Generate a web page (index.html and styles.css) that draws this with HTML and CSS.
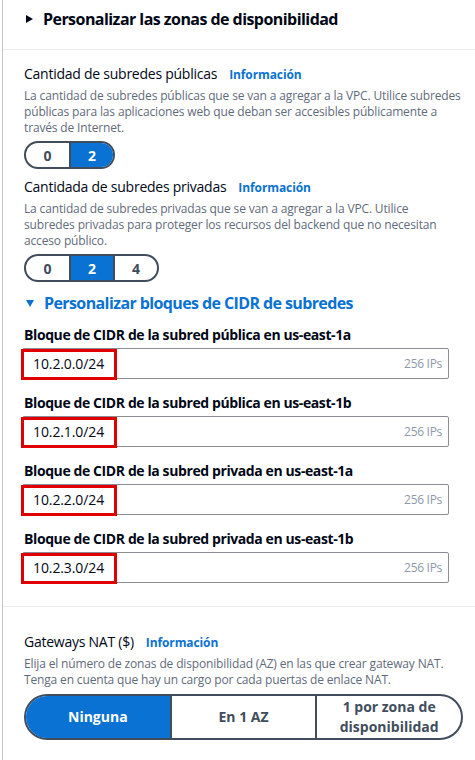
FILE: index.html
```html
<!DOCTYPE html>
<html lang="es">
<head>
<meta charset="utf-8">
<link rel="stylesheet" href="styles.css">
</head>
<body>
<div class="panel">
  <div class="section-head">
    <span class="caret caret-right"></span>
    <span class="head-title">Personalizar las zonas de disponibilidad</span>
  </div>
  <div class="section">
    <div class="field">
      <div class="label-row"><span class="label">Cantidad de subredes públicas</span><a class="info">Información</a></div>
      <div class="desc">La cantidad de subredes públicas que se van a agregar a la VPC. Utilice subredes públicas para las aplicaciones web que deban ser accesibles públicamente a través de Internet.</div>
      <div class="seg seg-small">
        <span class="opt">0</span><span class="opt on">2</span>
      </div>
    </div>
    <div class="field field-2">
      <div class="label-row"><span class="label">Cantidada de subredes privadas</span><a class="info">Información</a></div>
      <div class="desc">La cantidad de subredes privadas que se van a agregar a la VPC. Utilice<br>subredes privadas para proteger los recursos del backend que no necesitan acceso público.</div>
      <div class="seg seg-small">
        <span class="opt">0</span><span class="opt on">2</span><span class="opt">4</span>
      </div>
    </div>
    <div class="sub-head">
      <span class="caret caret-down"></span>
      <span class="sub-title">Personalizar bloques de CIDR de subredes</span>
    </div>
    <div class="cidr">
      <div class="cidr-label">Bloque de CIDR de la subred pública en us-east-1a</div>
      <div class="input"><span class="val">10.2.0.0/24</span><span class="ips">256 IPs</span><span class="mark"></span></div>
    </div>
    <div class="cidr">
      <div class="cidr-label">Bloque de CIDR de la subred pública en us-east-1b</div>
      <div class="input"><span class="val">10.2.1.0/24</span><span class="ips">256 IPs</span><span class="mark"></span></div>
    </div>
    <div class="cidr">
      <div class="cidr-label">Bloque de CIDR de la subred privada en us-east-1a</div>
      <div class="input"><span class="val">10.2.2.0/24</span><span class="ips">256 IPs</span><span class="mark"></span></div>
    </div>
    <div class="cidr">
      <div class="cidr-label">Bloque de CIDR de la subred privada en us-east-1b</div>
      <div class="input"><span class="val">10.2.3.0/24</span><span class="ips">256 IPs</span><span class="mark"></span></div>
    </div>
  </div>
  <div class="section section-nat">
    <div class="label-row"><span class="label">Gateways NAT ($)</span><a class="info">Información</a></div>
    <div class="desc">Elija el número de zonas de disponibilidad (AZ) en las que crear gateway NAT. Tenga en cuenta que hay un cargo por cada puertas de enlace NAT.</div>
    <div class="seg seg-big">
      <span class="opt on">Ninguna</span><span class="opt">En 1 AZ</span><span class="opt">1 por zona de disponibilidad</span>
    </div>
  </div>
</div>
</body>
</html>
```

FILE: styles.css
```css
* { box-sizing: border-box; }
html, body { margin: 0; padding: 0; background: #fff; }
body {
  font-family: "Open Sans", "Noto Sans", sans-serif;
  color: #000716;
  padding-left: 2px;
}
.panel {
  border-left: 1px solid #c6c6cd;
  min-height: 760px;
}
.section-head {
  height: 50px;
  border-bottom: 1px solid #e9ebed;
  display: flex;
  align-items: center;
  padding: 0 0 12px 23px;
  gap: 10px;
}
.caret { display: inline-block; width: 0; height: 0; }
.caret-right {
  border-top: 4px solid transparent;
  border-bottom: 4px solid transparent;
  border-left: 7px solid #000716;
}
.caret-down {
  border-left: 4px solid transparent;
  border-right: 4px solid transparent;
  border-top: 7px solid #0972d3;
}
.head-title {
  font-size: 16px;
  font-weight: 700;
  line-height: 22px;
  letter-spacing: -0.55px;
}
.section { padding: 14px 12px 23px 21px; border-bottom: 1px solid #e9ebed; }
.label-row { display: flex; align-items: center; gap: 12px; height: 20px; }
.label { font-size: 14px; line-height: 20px; letter-spacing: -0.25px; }
.info { font-size: 12px; font-weight: 700; color: #0972d3; letter-spacing: -0.1px; }
.desc {
  margin-top: 4px;
  font-size: 12px;
  line-height: 16px;
  color: #5f6b7a;
  letter-spacing: -0.15px;
}
.seg {
  display: inline-flex;
  border: 2px solid #414d5c;
  overflow: hidden;
  margin-top: 5px;
  font-weight: 700;
  font-size: 14px;
  color: #414d5c;
}
.seg-small { height: 28px; border-radius: 14px; }
.seg-small .opt { width: 44px; }
.seg-small .opt:first-child { width: 43px; }
.opt {
  display: flex; align-items: center; justify-content: center;
  text-align: center;
}
.opt + .opt { border-left: 2px solid #414d5c; }
.opt.on { background: #0972d3; color: #fff; }
.field-2 { margin-top: 8px; }
.sub-head { display: flex; align-items: center; gap: 10px; margin-top: 10px; padding-left: 2px; height: 22px; }
.sub-title { font-size: 16px; font-weight: 700; color: #0972d3; line-height: 22px; letter-spacing: -0.6px; }
.cidr { margin-top: 11px; }
.cidr + .cidr { margin-top: 14px; }
.cidr-label { font-size: 14px; font-weight: 700; line-height: 20px; letter-spacing: -0.4px; }
.input {
  position: relative;
  margin-top: 3px;
  margin-left: -2px;
  width: 427px;
  height: 31px;
  border: 1px solid #8c8c94;
  border-radius: 2px;
  display: flex; align-items: center; justify-content: space-between;
  padding: 0 6px 0 10px;
}
.val { font-size: 14px; letter-spacing: -0.1px; }
.ips { font-size: 12px; color: #8d99a8; letter-spacing: -0.3px; }
.mark {
  position: absolute;
  left: -2px; top: 0;
  width: 96px; height: 31px;
  border: 3px solid #e00000;
}
.section-nat { border-bottom: none; padding-top: 25px; }
.seg-big { display: flex; width: 439px; height: 46px; border-radius: 23px; margin-top: 6px; }
.seg-big .opt { flex: 1; line-height: 20px; padding: 0 12px; }
```
